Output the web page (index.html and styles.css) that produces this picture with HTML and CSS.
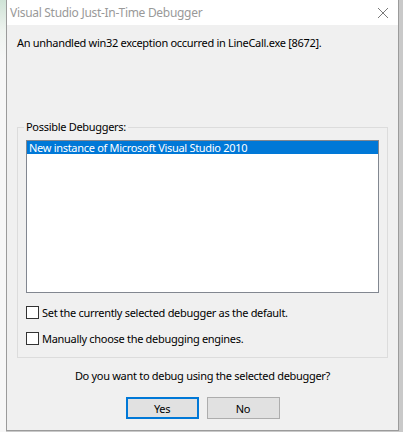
FILE: index.html
```html
<!DOCTYPE html>
<html>
<head>
<meta charset="utf-8">
<link rel="stylesheet" href="styles.css">
</head>
<body>
<div class="desk"></div>
<div class="window">
  <div class="titlebar">
    <span class="title">Visual Studio Just-In-Time Debugger</span>
    <svg class="close" width="12" height="12" viewBox="0 0 12 12"><path d="M1 1L11 11M11 1L1 11" stroke="#7a7a7a" stroke-width="1" fill="none"/></svg>
  </div>
  <div class="content">
    <p class="message">An unhandled win32 exception occurred in LineCall.exe [8672].</p>
    <fieldset class="group">
      <legend class="group-label">Possible Debuggers:</legend>
      <div class="listbox">
        <div class="item selected">New instance of Microsoft Visual Studio 2010</div>
      </div>
      <div class="checks">
        <label class="check"><span class="box"></span>Set the currently selected debugger as the default.</label>
        <label class="check"><span class="box"></span>Manually choose the debugging engines.</label>
      </div>
    </fieldset>
    <p class="question">Do you want to debug using the selected debugger?</p>
    <div class="buttons">
      <button class="btn default">Yes</button>
      <button class="btn">No</button>
    </div>
  </div>
</div>
</body>
</html>
```

FILE: styles.css
```css
* { box-sizing: border-box; }
html, body { margin: 0; padding: 0; }
body {
  width: 403px;
  height: 432px;
  display: flex;
  align-items: flex-start;
  background: #c9c9c9;
  font-family: "Noto Sans", "Open Sans", sans-serif;
  font-size: 11px;
  letter-spacing: -0.3px;
  color: #000;
  overflow: hidden;
}
.desk {
  width: 6px;
  height: 432px;
  background: linear-gradient(to bottom, #cfe3d6 0px, #eef3ef 30px, #f7f7f7 60px, #f7f7f7 100%);
}
.window {
  width: 393px;
  height: 431px;
  background: #f0f0f0;
  border-left: 1px solid #9b9b9b;
  border-right: 1px solid #9b9b9b;
  border-bottom: 1px solid #9b9b9b;
  display: flex;
  flex-direction: column;
}
.titlebar {
  height: 25px;
  background: #fff;
  display: flex;
  align-items: center;
  justify-content: space-between;
  padding: 0 9px 0 3px;
}
.title {
  font-size: 12px;
  letter-spacing: -0.3px;
  color: #999;
}
.close { display: block; }
.content {
  padding: 10px 10px 0 10px;
  display: flex;
  flex-direction: column;
}
.message {
  margin: 0;
  line-height: 16px;
}
.group {
  margin: 68px 0 0 0;
  padding: 5px 8px 12px 8px;
  border: 1px solid #dcdcdc;
  width: 371px;
  min-width: 0;
}
.group-label {
  padding: 0 2px;
  margin-left: -2px;
  line-height: 16px;
}
.listbox {
  height: 153px;
  background: #fff;
  border: 1px solid #828790;
}
.item {
  height: 13px;
  line-height: 13px;
  padding-left: 2px;
}
.item.selected {
  background: #0078d7;
  color: #fff;
}
.checks {
  margin-top: 13px;
  display: flex;
  flex-direction: column;
  gap: 13px;
}
.check {
  display: flex;
  align-items: center;
  height: 13px;
  gap: 3px;
}
.box {
  width: 13px;
  height: 13px;
  border: 1px solid #333;
  background: #fff;
}
.question {
  margin: 10px 0 0 0;
  text-align: center;
  line-height: 16px;
}
.buttons {
  margin-top: 13px;
  display: flex;
  justify-content: center;
  gap: 8px;
}
.btn {
  width: 73px;
  height: 22px;
  background: #e1e1e1;
  border: 1px solid #adadad;
  font-family: inherit;
  font-size: 11px;
  letter-spacing: -0.3px;
  color: #000;
  padding: 0;
}
.btn.default {
  border: 2px solid #0078d7;
}
```
